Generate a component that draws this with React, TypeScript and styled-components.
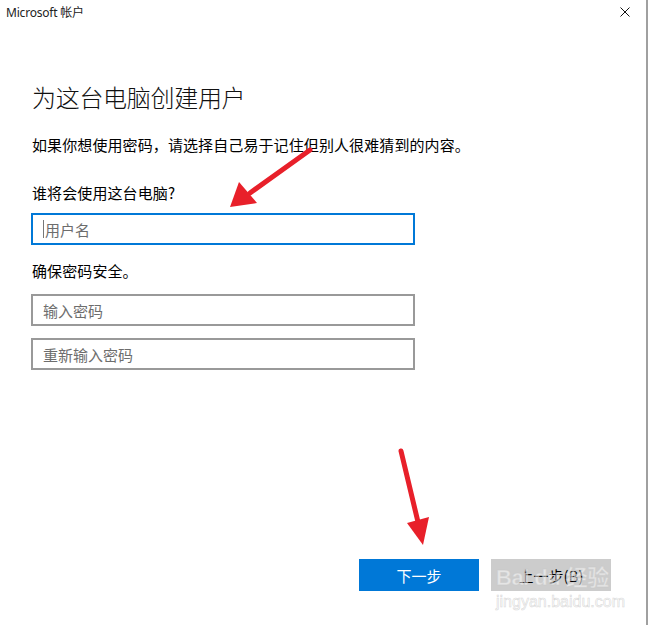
import React from "react";
import styled, { createGlobalStyle } from "styled-components";

const Global = createGlobalStyle`
  html, body { margin: 0; padding: 0; background: #ffffff; }
  body { font-family: "Noto Sans CJK SC", "Noto Sans", sans-serif; }
`;

const Window = styled.div`
  position: relative;
  width: 652px;
  height: 625px;
  box-sizing: border-box;
  background: #ffffff;
  display: flex;
  flex-direction: column;
  overflow: hidden;
`;

const EdgeLine = styled.div`
  position: absolute;
  top: 0;
  right: 4px;
  width: 2px;
  height: 625px;
  background: #a0a0a0;
`;

const TitleBar = styled.div`
  display: flex;
  align-items: center;
  justify-content: space-between;
  height: 24px;
  padding: 0 22px 0 6px;
`;

const TitleText = styled.span`
  font-family: "Noto Sans", "Noto Sans CJK SC", sans-serif;
  font-size: 12px;
  color: #222;
  letter-spacing: -0.2px;
`;

const CloseIcon = styled.svg`
  width: 10px;
  height: 10px;
`;

const Content = styled.div`
  display: flex;
  flex-direction: column;
  padding: 57px 0 0 31px;
  flex: 1;
`;

const Heading = styled.h1`
  margin: 0 0 22px 1px;
  font-weight: 300;
  font-size: 24px;
  line-height: 32px;
  color: #111;
  letter-spacing: -0.3px;
`;

const Text = styled.p<{ $mb: number }>`
  margin: 0 0 ${(p) => p.$mb}px 1px;
  font-size: 15px;
  font-weight: 400;
  line-height: 20px;
  color: #000;
  letter-spacing: 0.1px;
`;

const Field = styled.div<{ $focused?: boolean; $mb: number }>`
  box-sizing: border-box;
  width: 384px;
  height: 32px;
  border: 2px solid ${(p) => (p.$focused ? "#0078d7" : "#999999")};
  margin-bottom: ${(p) => p.$mb}px;
  display: flex;
  align-items: center;
  padding-left: 10px;
  font-size: 15px;
  color: #6d6d6d;
`;

const Caret = styled.span`
  display: inline-block;
  width: 1px;
  height: 18px;
  background: #777;
  margin-right: 1px;
`;

const Footer = styled.div`
  display: flex;
  justify-content: flex-end;
  gap: 12px;
  padding: 0 41px 34px 0;
`;

const Button = styled.div<{ $primary?: boolean }>`
  width: 120px;
  height: 32px;
  display: flex;
  align-items: center;
  justify-content: center;
  font-size: 15px;
  background: ${(p) => (p.$primary ? "#0078d7" : "#cccccc")};
  color: ${(p) => (p.$primary ? "#ffffff" : "#000000")};
`;

const ArrowLayer = styled.svg`
  position: absolute;
  left: 0;
  top: 0;
  width: 652px;
  height: 625px;
  pointer-events: none;
`;

const Watermark = styled.div`
  position: absolute;
  left: 496px;
  top: 564px;
  display: flex;
  flex-direction: column;
  align-items: flex-start;
  pointer-events: none;
`;

const WmLogo = styled.div`
  font-family: "Liberation Sans", "Noto Sans CJK SC", sans-serif;
  font-weight: 700;
  font-size: 22px;
  line-height: 28px;
  letter-spacing: -0.5px;
  color: rgba(255, 255, 255, 0.5);
  -webkit-text-stroke: 1px rgba(200, 200, 200, 0.55);
`;

const WmUrl = styled.div`
  font-family: "Liberation Sans", sans-serif;
  font-size: 16px;
  line-height: 18px;
  margin-top: 1px;
  color: rgba(255, 255, 255, 0.6);
  -webkit-text-stroke: 0.6px rgba(200, 200, 200, 0.7);
`;

export default function App() {
  return (
    <>
      <Global />
      <Window>
        <TitleBar>
          <TitleText>Microsoft 帐户</TitleText>
          <CloseIcon viewBox="0 0 10 10">
            <path d="M0.5 0.5 L9.5 9.5 M9.5 0.5 L0.5 9.5" stroke="#111" strokeWidth="1" />
          </CloseIcon>
        </TitleBar>
        <Content>
          <Heading>为这台电脑创建用户</Heading>
          <Text $mb={28}>如果你想使用密码，请选择自己易于记住但别人很难猜到的内容。</Text>
          <Text $mb={10}>谁将会使用这台电脑?</Text>
          <Field $focused $mb={16}>
            <Caret />
            用户名
          </Field>
          <Text $mb={13}>确保密码安全。</Text>
          <Field $mb={12}>输入密码</Field>
          <Field $mb={0}>重新输入密码</Field>
        </Content>
        <Footer>
          <Button $primary>下一步</Button>
          <Button>上一步(B)</Button>
        </Footer>
        <EdgeLine />
        <Watermark>
          <WmLogo>Bai du 经验</WmLogo>
          <WmUrl>jingyan.baidu.com</WmUrl>
        </Watermark>
        <ArrowLayer viewBox="0 0 652 625">
          <line x1="310" y1="150" x2="250" y2="193" stroke="#e8202a" strokeWidth="5" strokeLinecap="round" />
          <polygon points="230,207 239,182 257,203" fill="#e8202a" />
          <line x1="401" y1="451" x2="418" y2="522" stroke="#e8202a" strokeWidth="5" strokeLinecap="round" />
          <polygon points="423,545 407,523 429,517" fill="#e8202a" />
        </ArrowLayer>
      </Window>
    </>
  );
}
